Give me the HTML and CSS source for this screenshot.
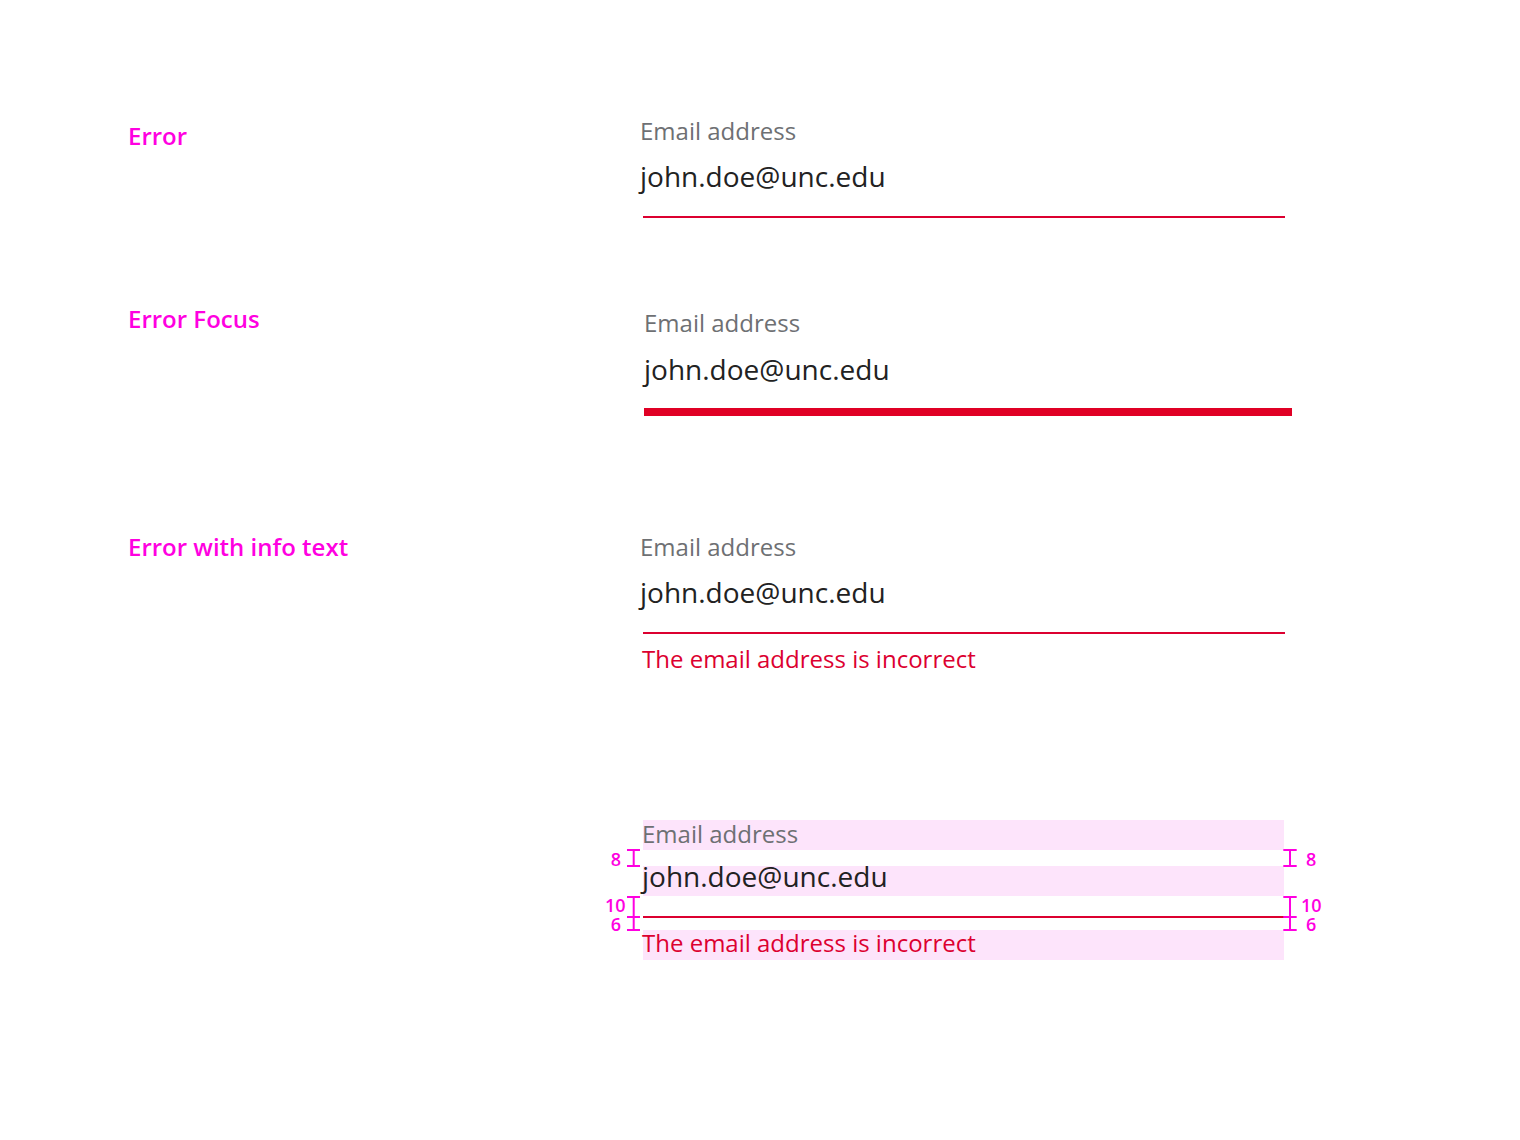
FILE: index.html
```html
<!DOCTYPE html>
<html lang="en">
<head>
<meta charset="utf-8">
<title>Text field – error states</title>
<link rel="stylesheet" href="styles.css">
</head>
<body>
<main class="page">
  <section class="row row-1">
    <h2 class="state state-1">Error</h2>
    <div class="field field-1">
      <div class="label">Email address</div>
      <div class="value">john.doe@unc.edu</div>
      <div class="rule"></div>
    </div>
  </section>

  <section class="row row-2">
    <h2 class="state state-2">Error Focus</h2>
    <div class="field field-2">
      <div class="label">Email address</div>
      <div class="value">john.doe@unc.edu</div>
      <div class="rule rule-focus"></div>
    </div>
  </section>

  <section class="row row-3">
    <h2 class="state state-3">Error with info text</h2>
    <div class="field field-3">
      <div class="label">Email address</div>
      <div class="value">john.doe@unc.edu</div>
      <div class="rule"></div>
      <div class="info">The email address is incorrect</div>
    </div>
  </section>

  <section class="row row-4">
    <div class="state"></div>
    <div class="field field-4 spec">
      <div class="label hl">Email address</div>
      <div class="value hl">john.doe@unc.edu</div>
      <div class="rule"></div>
      <div class="info hl">The email address is incorrect</div>

      <svg class="marks marks-left" width="43" height="90" viewBox="0 0 43 90">
        <g class="bracket">
          <line x1="33.7" y1="5" x2="33.7" y2="21"/>
          <line x1="27" y1="5" x2="40" y2="5"/>
          <line x1="27" y1="21" x2="40" y2="21"/>
          <line x1="33.7" y1="52" x2="33.7" y2="85"/>
          <line x1="27" y1="52" x2="40" y2="52"/>
          <line x1="27" y1="72" x2="40" y2="72"/>
          <line x1="27" y1="85" x2="40" y2="85"/>
        </g>
        <text x="21" y="21" text-anchor="end">8</text>
        <text x="25.5" y="66.5" text-anchor="end">10</text>
        <text x="21" y="85.5" text-anchor="end">6</text>
      </svg>

      <svg class="marks marks-right" width="50" height="90" viewBox="0 0 50 90">
        <g class="bracket">
          <line x1="11" y1="5" x2="11" y2="21"/>
          <line x1="4.3" y1="5" x2="17.7" y2="5"/>
          <line x1="4.3" y1="21" x2="17.7" y2="21"/>
          <line x1="11" y1="52" x2="11" y2="85"/>
          <line x1="4.3" y1="52" x2="17.7" y2="52"/>
          <line x1="4.3" y1="72" x2="17.7" y2="72"/>
          <line x1="4.3" y1="85" x2="17.7" y2="85"/>
        </g>
        <text x="27" y="21">8</text>
        <text x="22" y="66.5">10</text>
        <text x="27" y="85.5">6</text>
      </svg>
    </div>
  </section>
</main>
</body>
</html>
```

FILE: styles.css
```css
html, body {
  margin: 0;
  padding: 0;
  background: #ffffff;
}

body {
  font-family: "Open Sans", "Noto Sans", sans-serif;
  width: 1520px;
  height: 1140px;
  overflow: hidden;
}

.page {
  display: flex;
  flex-direction: column;
}

.row {
  display: flex;
  align-items: flex-start;
}

.row-1 { margin-top: 117px; }
.row-2 { margin-top: 91px; }
.row-3 { margin-top: 117px; }
.row-4 { margin-top: 144px; }

/* state headings */
.state {
  margin: 0 0 0 128px;
  width: 511px;
  flex: none;
  font-size: 24px;
  font-weight: 600;
  line-height: 30px;
  color: #ff00e1;
}

.state-1 { margin-top: 4px; }
.state-2 { margin-top: -5px; }
.state-3 { margin-top: -1px; }

/* text field */
.field {
  position: relative;
  display: flex;
  flex-direction: column;
  width: 660px;
}

.label {
  height: 30px;
  font-size: 24px;
  line-height: 27px;
  color: #6e7073;
  white-space: nowrap;
}

.value {
  height: 30px;
  font-size: 28px;
  line-height: 21px;
  color: #222222;
  white-space: nowrap;
}

.info {
  height: 30px;
  font-size: 24px;
  line-height: 25px;
  color: #dc0030;
  white-space: nowrap;
}

.rule {
  height: 2px;
  background: #dc0030;
}

.rule-focus {
  height: 8px;
  background: #e00025;
}

/* row 1 : error */
.field-1 { margin-left: 1px; }
.field-1 .value { margin-top: 19px; }
.field-1 .rule { margin: 20px 0 0 3px; width: 642px; }

/* row 2 : error focus */
.field-2 { margin-left: 5px; }
.field-2 .value { margin-top: 20px; }
.field-2 .rule { margin: 19px 0 0 0; width: 648px; }

/* row 3 : error with info text */
.field-3 { margin-left: 1px; }
.field-3 .value { margin-top: 19px; }
.field-3 .rule { margin: 20px 0 0 3px; width: 642px; }
.field-3 .info { margin: 12px 0 0 2px; }

/* row 4 : spec with measurements */
.field-4 {
  margin-left: 4px;
  width: 641px;
}
.field-4 .value { margin-top: 16px; }
.field-4 .rule { margin-top: 20px; }
.field-4 .info { margin-top: 12px; }

.hl {
  background: #fde4fb;
  text-indent: -1px;
}

.marks {
  position: absolute;
  top: 25px;
  overflow: visible;
}

.marks-left { left: -43px; }
.marks-right { left: 636px; }

.bracket line {
  stroke: #ff00e1;
  stroke-width: 2;
}

.marks text {
  font-family: "Open Sans", "Noto Sans", sans-serif;
  font-size: 18px;
  font-weight: 600;
  fill: #ff00e1;
}
```
